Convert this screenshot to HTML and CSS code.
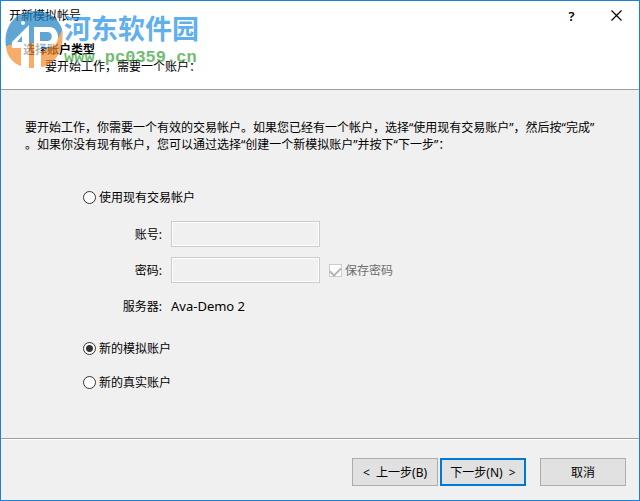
FILE: index.html
```
<!DOCTYPE html>
<html lang="zh-CN">
<head>
    <meta charset="UTF-8">
    <meta name="viewport" content="width=device-width, initial-scale=1.0">
    <title>开新模拟帐号</title>
    <link rel="stylesheet" href="styles.css">
</head>

<body>
    <form class="dialog">
        <header class="header">
            <div class="titlebar">
                <h1 class="title">开新模拟帐号</h1>
                <button class="title-btn" type="button" aria-label="帮助">?</button>
                <button class="title-btn" type="button" aria-label="关闭">
                    <svg width="11" height="11" viewBox="0 0 11 11"><path d="M0.5 0.5L10.5 10.5M10.5 0.5L0.5 10.5" stroke="#000" stroke-width="1.2"/></svg>
                </button>
            </div>
            <h2 class="heading">选择账户类型</h2>
            <p class="subheading">要开始工作，需要一个账户：</p>

            <div class="watermark">
                <svg class="logo" width="58" height="58" viewBox="0 0 58 58">
                    <path d="M1 37C-2 17 10 2 28 1C42 0 53 7 57 19C59 29 52 38 40 39H11C6 35 3 35 1 37Z" fill="#1e81c4"/>
                    <path d="M1 37C6 33 12 34 16 37V56C9 54 2 47 1 37Z" fill="#f58b2c"/>
                    <path d="M57 20C60 38 51 55 36 57V41C46 39 53 31 57 20Z" fill="#f58b2c"/>
                    <path d="M24 33H29V58H24Z" fill="#f58b2c"/>
                    <path d="M16 57V38H7V32L24 15V57ZM17 26L12 32H17Z" fill="#fff"/>
                    <path d="M29 57V17H44C56 17 56 37 44 37H36V57ZM35 22V31H43C48 31 48 22 43 22Z" fill="#fff" fill-rule="evenodd"/>
                    <circle cx="18" cy="13" r="2" fill="#fff"/>
                </svg>
                <div class="brand">
                    <span class="brand-name">河东软件园</span>
                    <span class="brand-url">www.pc0359.cn</span>
                </div>
            </div>
        </header>

        <main class="content">
            <p class="intro">要开始工作，你需要一个有效的交易帐户。如果您已经有一个帐户，选择“使用现有交易账户”，然后按“完成”<br>。如果你没有现有帐户，您可以通过选择“创建一个新模拟账户”并按下“下一步”：</p>

            <label class="option"><input type="radio" name="account"> 使用现有交易帐户</label>

            <div class="fields">
                <label class="field-label" for="login">账号:</label>
                <input class="text-box" type="text" id="login" disabled>
                <label class="field-label" for="password">密码:</label>
                <input class="text-box" type="password" id="password" disabled>
                <label class="save"><input type="checkbox" checked disabled> 保存密码</label>
                <span class="field-label">服务器:</span>
                <span class="server">Ava-Demo 2</span>
            </div>

            <label class="option"><input type="radio" name="account" checked> 新的模拟账户</label>
            <label class="option"><input type="radio" name="account"> 新的真实账户</label>
        </main>

        <footer class="footer">
            <button class="btn" type="button">&lt;&nbsp; 上一步(B)</button>
            <button class="btn btn-default" type="button">下一步(N) &nbsp;&gt;</button>
            <button class="btn btn-cancel" type="button">取消</button>
        </footer>
    </form>
</body>
</html>
```

FILE: styles.css
```
* {
    box-sizing: border-box;
}
body {
    margin: 0;
    font: 12px/17px "Noto Sans", "Noto Sans CJK SC", sans-serif;
    color: #000;
}
h1, h2, p {
    margin: 0;
    font-size: 12px;
}
.dialog {
    display: flex;
    flex-direction: column;
    min-height: 100vh;
    background: #f0f0f0;
    border: 1px solid #1883d7;
}
.header {
    position: relative;
    height: 89px;
    background: #fff;
    border-bottom: 1px solid #a0a0a0;
}
.titlebar {
    display: flex;
    align-items: center;
    height: 29px;
    padding-left: 8px;
}
.title {
    flex: 1;
    font-weight: normal;
}
.title-btn {
    display: flex;
    align-items: center;
    justify-content: center;
    width: 45px;
    height: 29px;
    padding: 0;
    border: none;
    background: none;
    font: 600 13px "Noto Sans", sans-serif;
}
.heading {
    padding: 11px 0 0 22px;
    font-weight: bold;
}
.subheading {
    padding-left: 44px;
}
/* site logo stamped over the header */
.watermark {
    position: absolute;
    top: 9px;
    left: 4px;
    display: flex;
    gap: 1px;
    opacity: 0.7;
    pointer-events: none;
}
.brand {
    display: flex;
    flex-direction: column;
    padding-top: 3px;
    white-space: nowrap;
}
.brand-name {
    font: bold 27px/30px "Noto Sans CJK SC", sans-serif;
    color: #1e8fe8;
}
.brand-url {
    font: bold 17px/30px "Liberation Mono", monospace;
    color: #35a035;
}
.content {
    flex: 1;
    padding: 29px 24px 0;
}
.intro {
    white-space: nowrap;
}
.option {
    display: flex;
    align-items: center;
    gap: 3px;
    height: 17px;
    margin: 17px 0 0 58px;
}
.intro + .option {
    margin-top: 36px;
}
input[type="radio"],
input[type="checkbox"] {
    flex: none;
    appearance: none;
    width: 13px;
    height: 13px;
    margin: 0;
    background: #fff;
    border: 1px solid #333;
}
input[type="radio"] {
    border-radius: 50%;
}
input[type="radio"]:checked {
    background: radial-gradient(circle, #333 3px, #fff 4px);
}
input[type="checkbox"] {
    display: flex;
    justify-content: center;
    border-color: #ccc;
}
input[type="checkbox"]:checked::before {
    content: "";
    width: 9px;
    height: 5px;
    margin-top: 2px;
    border: solid #b4b4b4;
    border-width: 0 0 2px 2px;
    transform: rotate(-45deg);
}
.fields {
    display: grid;
    grid-template-columns: 137px 149px 1fr;
    grid-auto-rows: 26px;
    align-items: center;
    gap: 10px 9px;
    margin: 15px 0;
}
.field-label {
    grid-column: 1;
    text-align: right;
}
.text-box {
    width: 100%;
    height: 26px;
    border: 1px solid #ccc;
    background: #f0f0f0;
    box-shadow: inset 0 0 0 1px #fff;
}
.save {
    display: flex;
    align-items: center;
    gap: 3px;
    color: #6d6d6d;
}
.server {
    font-size: 13px;
}
.fields + .option {
    margin-top: 21px;
}
.footer {
    display: flex;
    justify-content: flex-end;
    gap: 2px;
    padding: 19px 13px 14px;
    border-top: 1px solid #a0a0a0;
    box-shadow: inset 0 1px #fff;
}
.btn {
    width: 86px;
    height: 28px;
    padding: 0;
    border: 1px solid #adadad;
    background: #e1e1e1;
    color: #000;
    font: inherit;
}
.btn-default {
    border: 2px solid #0078d7;
}
.btn-cancel {
    margin-left: 12px;
}
```
